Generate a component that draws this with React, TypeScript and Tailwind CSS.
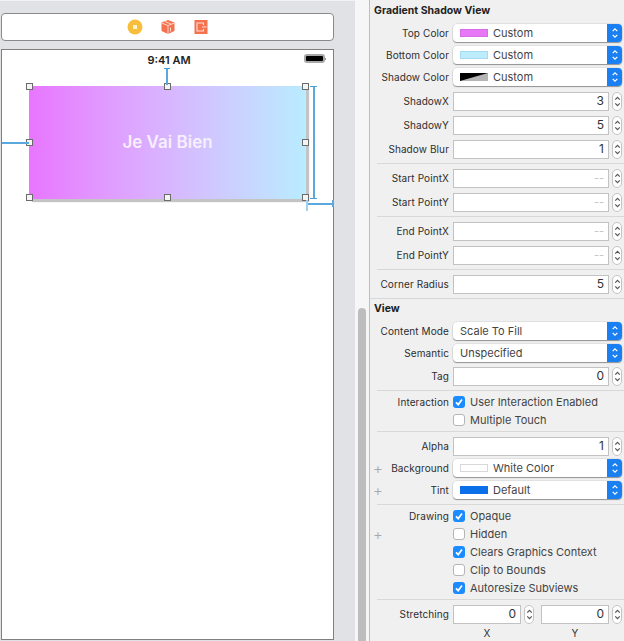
import type { ReactNode } from "react";

const FONT = "font-['Inter','Liberation_Sans',sans-serif]";

function UpDown({ className }: { className: string }) {
  return (
    <svg viewBox="0 0 10 15" fill="none" className={className} stroke="currentColor" strokeWidth="1.3">
      <path d="M2.5 5.5 5 3l2.5 2.5M2.5 9.5 5 12l2.5-2.5" />
    </svg>
  );
}

function Stepper() {
  return (
    <div className="ml-[3px] flex h-[19px] w-[10px] flex-none items-center justify-center rounded-full border border-[#c4c4c4] bg-white text-[#555]">
      <UpDown className="h-[15px] w-[9px] flex-none" />
    </div>
  );
}

function Row({ label, plus, children, className = "h-[24px]" }: { label?: string; plus?: boolean; children?: ReactNode; className?: string }) {
  return (
    <div className={`flex items-center ${className}`}>
      <div className="flex w-[79px] flex-none items-center justify-end whitespace-nowrap text-[10px] tracking-[0.1px] text-[#2e2e2e]">
        {plus && <span className="ml-[3px] mr-auto text-[15px] leading-none font-light text-[#a8a8a8]">+</span>}
        {label}
      </div>
      <div className="ml-[4px] flex items-center">{children}</div>
    </div>
  );
}

function NumberRow({ label, value }: { label: string; value?: string }) {
  return (
    <Row label={label}>
      <div className={`flex h-[19px] w-[156px] items-center justify-end border border-[#c2c2c2] bg-white pr-[4px] ${value ? "text-[12px] text-[#333]" : "text-[#c4c4c4]"}`}>
        {value ?? "--"}
      </div>
      <Stepper />
    </Row>
  );
}

function SelectRow({ label, text, swatch, plus, className = "h-[22px]" }: { label: string; text: string; swatch?: ReactNode; plus?: boolean; className?: string }) {
  return (
    <Row label={label} plus={plus} className={className}>
      <div className="flex h-[18px] w-[169px] items-center overflow-hidden rounded-[4px] bg-white pl-[7px] text-[#444] shadow-[0_1px_1px_rgba(0,0,0,0.35),0_0_0_0.5px_rgba(0,0,0,0.12)]">
        {swatch}
        <span className={swatch ? "ml-[5px]" : ""}>{text}</span>
        <div className="ml-auto flex h-full w-[15px] items-center justify-center bg-[#1a7ff0] text-white">
          <UpDown className="h-[14px] w-[10px]" />
        </div>
      </div>
    </Row>
  );
}

function Swatch({ color }: { color: string }) {
  return <div className={`h-[8px] w-[28px] flex-none border ${color}`} />;
}

function CheckRow({ label, text, checked, plus }: { label?: string; text: string; checked?: boolean; plus?: boolean }) {
  return (
    <Row label={label} plus={plus} className="h-[18px]">
      <div className={`flex h-[12px] w-[12px] flex-none items-center justify-center rounded-[3px] ${checked ? "bg-[#1a8cff]" : "border border-[#b5b5b5] bg-white"}`}>
        {checked && (
          <svg viewBox="0 0 12 12" className="h-[12px] w-[12px]" fill="none" stroke="white" strokeWidth="1.7">
            <path d="M3 6.3 5.2 8.6 9 3.5" />
          </svg>
        )}
      </div>
      <span className="ml-[5px] text-[#444]">{text}</span>
    </Row>
  );
}

function Divider({ className = "my-[2px]" }: { className?: string }) {
  return <div className={`ml-[7px] h-px bg-[#d8d8d8] ${className}`} />;
}

function Handle({ className }: { className: string }) {
  return <div className={`absolute h-[7px] w-[7px] border border-[#6b6b6b] bg-[#f4f4f4] ${className}`} />;
}

function Constraints() {
  return (
    <>
      {/* top */}
      <div className="absolute left-[164px] top-[18px] h-[17px] w-[2px] bg-[#5aa8dc]" />
      <div className="absolute left-[162px] top-[18px] h-px w-[6px] bg-[#4a9fd8]" />
      {/* left */}
      <div className="absolute left-0 top-[92px] h-[2px] w-[27px] bg-[#5aa8dc]" />
      {/* height */}
      <div className="absolute left-[311px] top-[37px] h-[112px] w-[2px] bg-[#5aa8dc]" />
      <div className="absolute left-[308px] top-[36px] h-px w-[7px] bg-[#4a9fd8]" />
      <div className="absolute left-[308px] top-[148px] h-px w-[7px] bg-[#4a9fd8]" />
      {/* bottom right */}
      <div className="absolute left-[305px] top-[153px] h-[2px] w-[26px] bg-[#5aa8dc]" />
      <div className="absolute left-[304px] top-[150px] h-[11px] w-[2px] bg-[#a5d0ec]" />
      <div className="absolute left-[330px] top-[150px] h-[7px] w-[2px] bg-[#5aa8dc]" />
    </>
  );
}

export default function App() {
  return (
    <div className={`flex h-[641px] w-[624px] overflow-hidden bg-[#f0f0f0] text-[11px] ${FONT}`}>
      {/* canvas */}
      <div className="flex w-[355px] flex-none flex-col border-t border-[#f2f2f2] bg-[#e1e2e5] pl-[1px] pr-[21px] pt-[12px]">
        <div className="flex h-[28px] items-center justify-center gap-[17px] rounded-[4px] border border-[#8a8a8a] bg-white">
          <svg viewBox="0 0 16 16" className="h-[16px] w-[16px]">
            <circle cx="8" cy="8" r="7.5" fill="#f9bd3c" />
            <rect x="6" y="6" width="4" height="4" fill="#fff3d0" />
          </svg>
          <svg viewBox="0 0 16 16" className="h-[16px] w-[16px]">
            <path d="M8 1 14.5 3.5V12L8 15 1.5 12V3.5Z" fill="#f4724e" />
            <path d="M1.5 4 8 6.5 14.5 4M8 6.5V15M5 2.5 11 5M10.5 8.5v4" stroke="#fde0d6" strokeWidth="0.9" fill="none" />
          </svg>
          <svg viewBox="0 0 16 16" className="h-[16px] w-[16px]">
            <rect x="1.5" y="1" width="13" height="14" fill="#f4724e" />
            <path d="M10.5 6V4H4v8h6.5v-2M9 8h4.5" stroke="#fde0d6" strokeWidth="1.1" fill="none" />
          </svg>
        </div>
        <div className="relative mt-[8px] h-[591px] border border-[#7f7f7f] bg-white">
          <div className="relative flex h-[20px] items-center justify-center pl-[3px] font-semibold text-[#222]">
            9:41 AM
            <div className="absolute right-[7px] top-[4px] flex items-center">
              <div className="h-[9px] w-[21px] rounded-[3px] border-2 border-[#a8a8a8] bg-black" />
              <div className="h-[2px] w-px bg-[#999]" />
            </div>
          </div>
          <div className="relative ml-[27px] mt-[16px] flex h-[113px] w-[277px] items-center justify-center bg-gradient-to-r from-[#e875ff] to-[#b8ecff] text-[17px] font-semibold text-[#f6effc] shadow-[3px_3px_1px_#c4c4c4]">
            Je Vai Bien
            <Handle className="left-[-3px] top-[-3px]" />
            <Handle className="left-[135px] top-[-3px]" />
            <Handle className="right-[-3px] top-[-3px]" />
            <Handle className="left-[-3px] top-[53px]" />
            <Handle className="right-[-3px] top-[53px]" />
            <Handle className="bottom-[-2px] left-[-3px]" />
            <Handle className="bottom-[-2px] left-[135px]" />
            <Handle className="bottom-[-2px] right-[-3px]" />
          </div>
          <Constraints />
        </div>
      </div>

      {/* scroller */}
      <div className="flex w-[14px] flex-none flex-col justify-end bg-[#f6f6f6] px-[3px]">
        <div className="h-[333px] rounded-t-[4px] bg-[#bdbdbd]" />
      </div>

      {/* inspector */}
      <div className="w-[255px] flex-none border-l border-[#bdbdbd] bg-[#f0f0f0]">
        <div className="flex h-[22px] items-center pl-[4px] text-[10.5px] font-bold text-[#222]">Gradient Shadow View</div>
        <SelectRow label="Top Color" text="Custom" swatch={<Swatch color="bg-[#e678f5] border-[#d96be8]" />} />
        <SelectRow label="Bottom Color" text="Custom" swatch={<Swatch color="bg-[#bdecff] border-[#a6dcef]" />} />
        <SelectRow
          label="Shadow Color"
          text="Custom"
          className="mb-[1px] h-[22px]"
          swatch={
            <svg viewBox="0 0 28 8" className="h-[8px] w-[28px] flex-none">
              <rect width="28" height="8" fill="#b5b5b5" />
              <path d="M0 0h28L0 8Z" fill="#000" />
            </svg>
          }
        />
        <NumberRow label="ShadowX" value="3" />
        <NumberRow label="ShadowY" value="5" />
        <NumberRow label="Shadow Blur" value="1" />
        <Divider />
        <NumberRow label="Start PointX" />
        <NumberRow label="Start PointY" />
        <Divider />
        <NumberRow label="End PointX" />
        <NumberRow label="End PointY" />
        <Divider />
        <NumberRow label="Corner Radius" value="5" />
        <div className="mt-[2px] h-px bg-[#d8d8d8]" />
        <div className="mb-[2px] flex h-[19px] items-center pl-[4px] text-[10.5px] font-bold text-[#222]">View</div>
        <SelectRow label="Content Mode" text="Scale To Fill" />
        <SelectRow label="Semantic" text="Unspecified" />
        <NumberRow label="Tag" value="0" />
        <Divider />
        <CheckRow label="Interaction" text="User Interaction Enabled" checked />
        <CheckRow text="Multiple Touch" />
        <Divider />
        <NumberRow label="Alpha" value="1" />
        <SelectRow label="Background" plus text="White Color" className="-mt-px h-[22px]" swatch={<Swatch color="bg-white border-[#d8d8d8]" />} />
        <SelectRow label="Tint" plus text="Default" swatch={<Swatch color="bg-[#0a6fe8] border-[#0a6fe8]" />} />
        <Divider className="mb-[2px] mt-[3px]" />
        <CheckRow label="Drawing" text="Opaque" checked />
        <CheckRow plus text="Hidden" />
        <CheckRow text="Clears Graphics Context" checked />
        <CheckRow text="Clip to Bounds" />
        <CheckRow text="Autoresize Subviews" checked />
        <Divider />
        <Row label="Stretching">
          <div className="flex h-[19px] w-[68px] items-center justify-end border border-[#c2c2c2] bg-white pr-[4px] text-[12px] text-[#333]">0</div>
          <Stepper />
          <div className="ml-[7px] flex h-[19px] w-[68px] items-center justify-end border border-[#c2c2c2] bg-white pr-[4px] text-[12px] text-[#333]">0</div>
          <Stepper />
        </Row>
        <div className="ml-[83px] flex h-[14px] items-center text-[10px] text-[#333]">
          <span className="w-[88px] pr-[20px] text-center">X</span>
          <span className="w-[68px] text-center">Y</span>
        </div>
      </div>
    </div>
  );
}
